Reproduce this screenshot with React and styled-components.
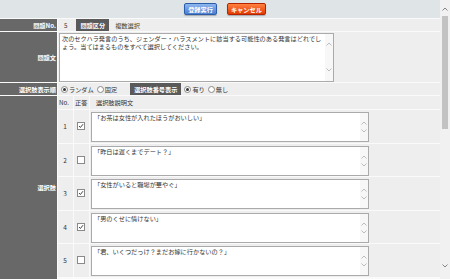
import React from 'react';
import styled, { createGlobalStyle } from 'styled-components';

const GlobalStyle = createGlobalStyle`
  html, body {
    margin: 0;
    padding: 0;
    background: #ffffff;
  }
  body {
    font-family: "Noto Sans CJK JP", "Liberation Sans", sans-serif;
    font-size: 6.2px;
    color: #333;
  }
`;

const choices = [
    { no: 1, correct: true, text: '「お茶は女性が入れたほうがおいしい」' },
    { no: 2, correct: false, text: '「昨日は遅くまでデート？」' },
    { no: 3, correct: true, text: '「女性がいると職場が華やぐ」' },
    { no: 4, correct: true, text: '「男のくせに情けない」' },
    { no: 5, correct: false, text: '「君、いくつだっけ？まだお嫁に行かないの？」' },
];

const Chevron = ({ up, color = '#b5b5b5' }) => (
    <svg width="6" height="4" viewBox="0 0 6 4">
        <path
            d={up ? 'M0.5 3.5 L3 1 L5.5 3.5' : 'M0.5 0.5 L3 3 L5.5 0.5'}
            fill="none"
            stroke={color}
            strokeWidth="0.9"
        />
    </svg>
);

const Check = () => (
    <svg width="6" height="6" viewBox="0 0 6 6">
        <path d="M1 3 L2.4 4.5 L5 1.2" fill="none" stroke="#444" strokeWidth="1" />
    </svg>
);

const TextBox = ({ children, width, height }) => (
    <StyledTextBox $width={width} $height={height}>
        <div className="text">{children}</div>
        <div className="strip">
            <Chevron up />
            <Chevron />
        </div>
    </StyledTextBox>
);

const Radio = ({ on, children }) => (
    <RadioItem>
        <RadioDot $on={on} />
        {children}
    </RadioItem>
);

const App = () => {
    return (
        <>
            <GlobalStyle />
            <Screen>
                <Main>
                    <TopBar>
                        <Button $kind="blue">登録実行</Button>
                        <Button $kind="red">キャンセル</Button>
                    </TopBar>
                    <Form>
                        <Label>問題No.</Label>
                        <Cell>
                            <Value>5</Value>
                            <InlineLabel>問題区分</InlineLabel>
                            <Value $olive>複数選択</Value>
                        </Cell>

                        <Label>問題文</Label>
                        <Cell $pad="1px 0 1px 1px">
                            <TextBox width={275} height={49}>
                                次のセクハラ発言のうち、ジェンダー・ハラスメントに該当する可能性のある発言はどれでしょう。当てはまるものをすべて選択してください。
                            </TextBox>
                        </Cell>

                        <Label>選択肢表示順</Label>
                        <Cell $gap="2px">
                            <Radio on>ランダム</Radio>
                            <Radio>固定</Radio>
                            <InlineLabel $wide>選択肢番号表示</InlineLabel>
                            <Radio on>有り</Radio>
                            <Radio>無し</Radio>
                        </Cell>

                        <Label>選択肢</Label>
                        <Choices>
                            <HeadCell>No.</HeadCell>
                            <HeadCell>正答</HeadCell>
                            <HeadCell $indent>選択肢説明文</HeadCell>
                            {choices.map((c) => (
                                <React.Fragment key={c.no}>
                                    <NoCell>{c.no}</NoCell>
                                    <CheckCell>
                                        <CheckBox>{c.correct && <Check />}</CheckBox>
                                    </CheckCell>
                                    <TextCell>
                                        <TextBox width={278} height={30}>{c.text}</TextBox>
                                    </TextCell>
                                </React.Fragment>
                            ))}
                        </Choices>
                    </Form>
                </Main>
                <ScrollBar>
                    <div className="arrow"><Chevron up color="#777" /></div>
                    <div className="track">
                        <div className="thumb" />
                    </div>
                    <div className="arrow"><Chevron color="#777" /></div>
                </ScrollBar>
            </Screen>
        </>
    );
}

const Screen = styled.div`
    display: flex;
    width: 450px;
    height: 279px;
    overflow: hidden;
`;

const Main = styled.div`
    flex: 1;
    display: flex;
    flex-direction: column;
    background: #fafafa;
    gap: 1px;
    overflow: hidden;
`;

const TopBar = styled.div`
    height: 18px;
    flex-shrink: 0;
    background: #dfe4e7;
    display: flex;
    justify-content: center;
    align-items: flex-start;
    gap: 10px;
    padding-top: 3px;
    box-sizing: border-box;
    padding-left: 10px;
`;

const Button = styled.div`
    height: 12px;
    padding: 0 3px;
    box-sizing: border-box;
    display: flex;
    align-items: center;
    color: #fff;
    font-weight: bold;
    border-radius: 2px;
    border: 1px solid ${p => p.$kind === 'blue' ? '#2d5da8' : '#b52400'};
    background: ${p => p.$kind === 'blue'
        ? 'linear-gradient(#8db6ee, #4a7fd2)'
        : 'linear-gradient(#ff8140, #e33a05)'};
    box-shadow: 0 1px 1px rgba(0,0,0,0.25);
`;

const Form = styled.div`
    flex: 1;
    display: grid;
    grid-template-columns: 57px 1fr;
    grid-template-rows: 12px 50px 12px 1fr;
    gap: 1px;
    background: #fafafa;
`;

const Label = styled.div`
    background: #686868;
    color: #fff;
    font-weight: bold;
    display: flex;
    align-items: center;
    justify-content: flex-end;
    padding-right: 1px;
`;

const Cell = styled.div`
    background: #eeeeee;
    display: flex;
    align-items: center;
    padding: ${p => p.$pad || '0 0 0 3px'};
    gap: ${p => p.$gap || '3px'};
`;

const Value = styled.span`
    color: ${p => p.$olive ? '#4a4a30' : '#333'};
    margin-right: ${p => p.$olive ? '0' : '6px'};
    margin-left: 3px;
`;

const InlineLabel = styled.span`
    background: #5a5a5a;
    color: #fff;
    font-weight: bold;
    align-self: stretch;
    display: flex;
    align-items: center;
    padding: 0 4px;
    margin-left: ${p => p.$wide ? '10px' : '0'};
    margin-right: ${p => p.$wide ? '1px' : '0'};
`;

const StyledTextBox = styled.div`
    width: ${p => p.$width}px;
    height: ${p => p.$height}px;
    box-sizing: border-box;
    border: 1px solid #aaaaaa;
    background: #fff;
    display: flex;
    .text {
        flex: 1;
        padding: 1px 2px;
        line-height: 8px;
        color: #333;
        overflow: hidden;
    }
    .strip {
        width: 8px;
        background: #f7f7f7;
        display: flex;
        flex-direction: column;
        justify-content: space-between;
        align-items: center;
        padding: ${p => p.$height > 40 ? '8px 0 9px' : '8px 0 8px'};
    }
`;

const RadioItem = styled.span`
    display: flex;
    align-items: center;
    gap: 1px;
    margin-right: 1px;
    color: #333;
`;

const RadioDot = styled.span`
    width: 5px;
    height: 5px;
    border-radius: 50%;
    border: 1px solid #888;
    background: #fff;
    box-sizing: content-box;
    display: flex;
    align-items: center;
    justify-content: center;
    &::after {
        content: '';
        width: 3px;
        height: 3px;
        border-radius: 50%;
        background: ${p => p.$on ? '#333' : 'transparent'};
    }
`;

const Choices = styled.div`
    display: grid;
    grid-template-columns: 15px 15px 1fr;
    grid-auto-rows: 32.5px;
    grid-template-rows: 13px;
    gap: 1px;
    background: #fafafa;
`;

const HeadCell = styled.div`
    background: #eeeeee;
    display: flex;
    align-items: center;
    padding-left: ${p => p.$indent ? '6px' : '1px'};
    white-space: nowrap;
    overflow: visible;
`;

const NoCell = styled.div`
    background: #eeeeee;
    display: flex;
    align-items: center;
    justify-content: center;
    font-size: 6.5px;
    padding-right: 1px;
`;

const CheckCell = styled(NoCell)`
    padding-right: 2px;
`;

const CheckBox = styled.span`
    width: 6px;
    height: 6px;
    border: 1px solid #8a8a8a;
    background: #fff;
    display: flex;
    align-items: center;
    justify-content: center;
`;

const TextCell = styled.div`
    background: #eeeeee;
    padding: 2px 0 0 1px;
`;

const ScrollBar = styled.div`
    width: 10px;
    background: #f1f1f1;
    display: flex;
    flex-direction: column;
    .arrow {
        height: 14px;
        display: flex;
        align-items: center;
        justify-content: center;
    }
    .arrow:first-child {
        padding-top: 2px;
    }
    .arrow:last-child {
        height: 20px;
        padding-bottom: 6px;
        box-sizing: border-box;
    }
    .track {
        flex: 1;
        padding: 0 2px;
    }
    .thumb {
        height: 113px;
        background: #c3c3c3;
        margin-top: 0;
    }
`;

export default App;
